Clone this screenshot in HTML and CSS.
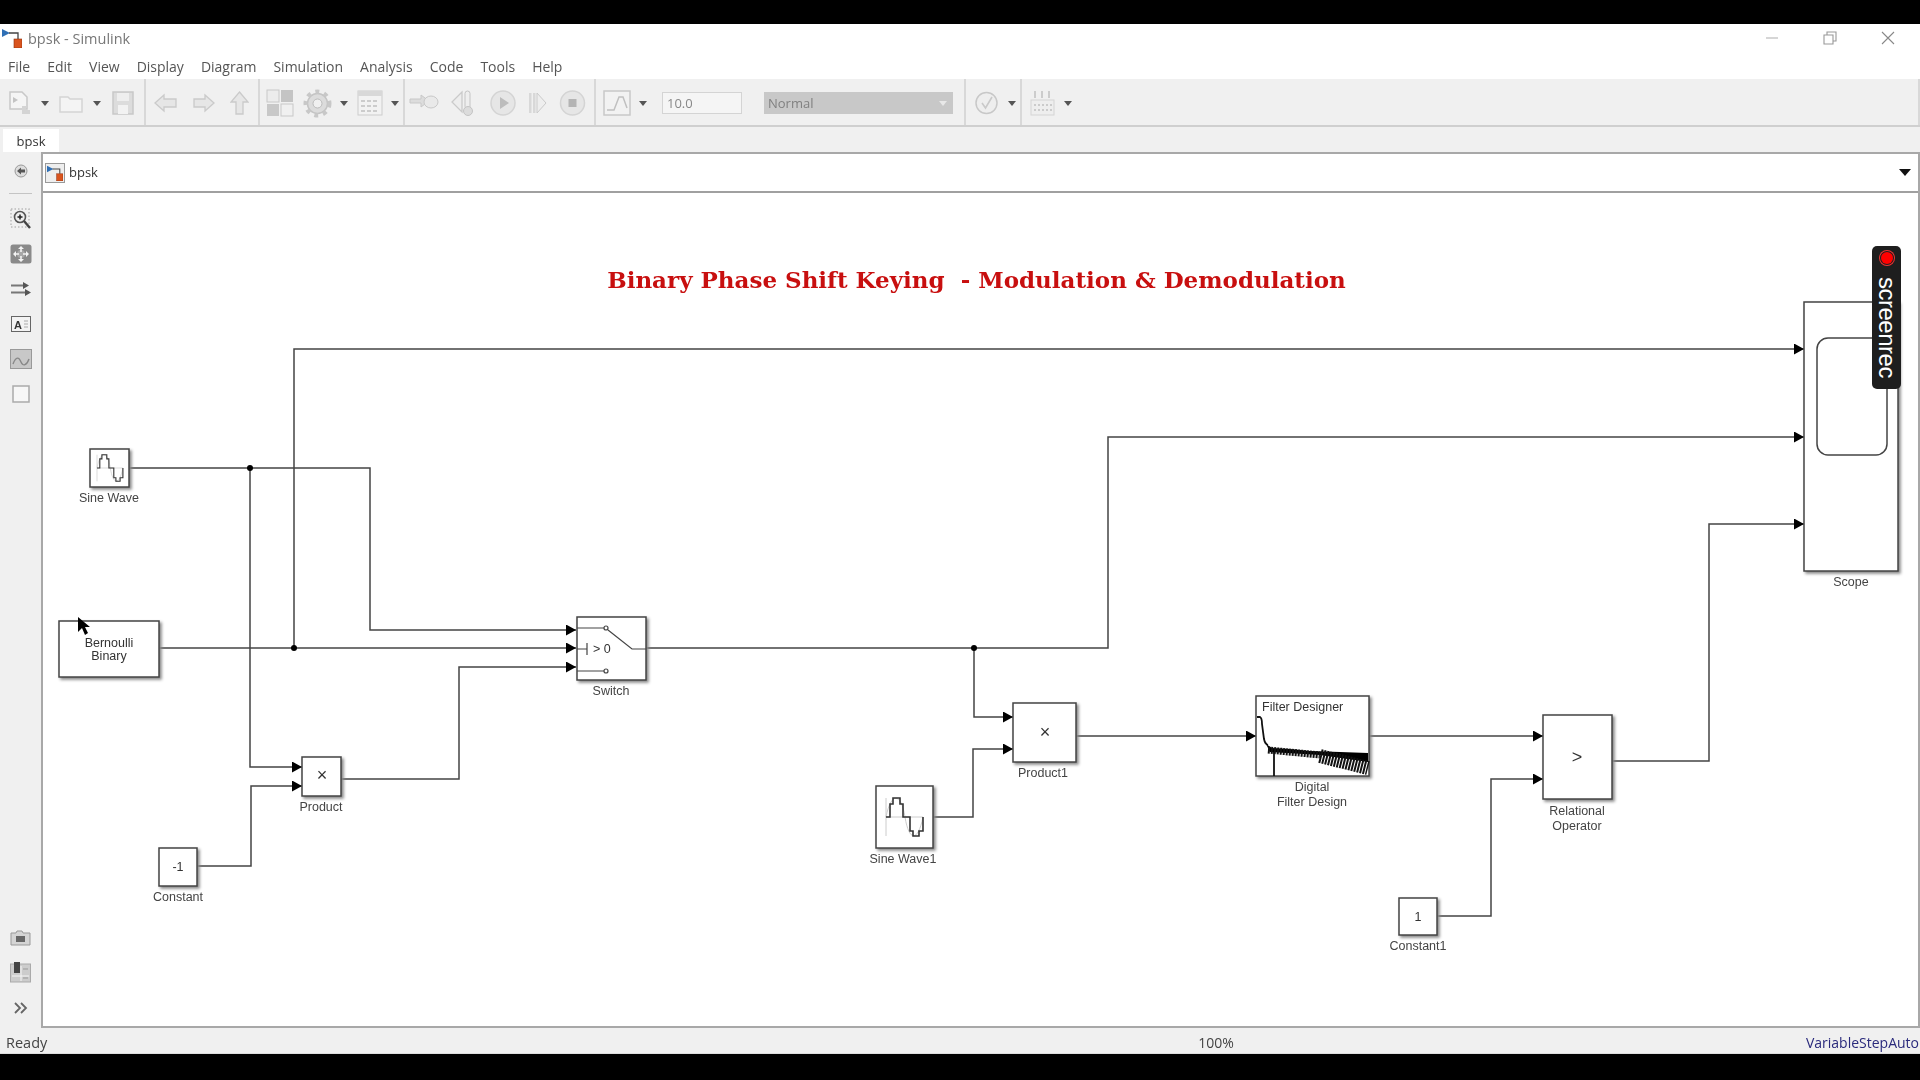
FILE: index.html
```html
<!DOCTYPE html>
<html lang="en">

<head>
    <meta charset="UTF-8">
    <title>bpsk - Simulink</title>
    <link rel="stylesheet" href="styles.css">
</head>

<body>
    <svg class="defs" width="0" height="0">
        <defs>
            <!-- Simulink logo, used in title bar and breadcrumb -->
            <symbol id="logo" viewBox="0 0 20 20">
                <path d="M0 1 L8 5 L0 9 Z" fill="#2f6fb5" />
                <path d="M7 5 H16 V11" fill="none" stroke="#444" stroke-width="1.3" />
                <rect x="12" y="11" width="8" height="9" fill="#d9541e" stroke="#8c3010" stroke-width=".6" />
            </symbol>
            <symbol id="caret" viewBox="0 0 8 5">
                <path d="M0 0 H8 L4 5 Z" fill="#555" />
            </symbol>
            <marker id="arrow" markerUnits="userSpaceOnUse" markerWidth="10" markerHeight="11" refX="10" refY="5.5"
                orient="auto">
                <path d="M0 0 L10 5.5 L0 11 Z" fill="#000" />
            </marker>
        </defs>
    </svg>

    <div class="app">
        <div class="titlebar">
            <svg class="title-logo"><use href="#logo" /></svg>
            <span class="title-text">bpsk - Simulink</span>
            <div class="win-controls">
                <svg width="14" height="14" viewBox="0 0 14 14"><path d="M1 7 H13" stroke="#bbb" stroke-width="1.2" /></svg>
                <svg width="14" height="14" viewBox="0 0 14 14"><path d="M1 4 H10 V13 H1 Z M4 4 V1 H13 V10 H10" fill="none" stroke="#999" stroke-width="1.1" /></svg>
                <svg width="14" height="14" viewBox="0 0 14 14"><path d="M1 1 L13 13 M13 1 L1 13" stroke="#888" stroke-width="1.1" /></svg>
            </div>
        </div>

        <div class="menubar">
            <span>File</span><span>Edit</span><span>View</span><span>Display</span><span>Diagram</span>
            <span>Simulation</span><span>Analysis</span><span>Code</span><span>Tools</span><span>Help</span>
        </div>

        <div class="toolbar">
            <div class="tb-group g1">
                <svg width="23" height="26" viewBox="0 0 23 26"><path d="M2 2 H14 L19 7 V19 H2 Z" fill="#f5f5f5" stroke="#c8c8c8" stroke-width="1.5" /><path d="M5 7 L10 10 L5 13 Z" fill="#c4c4c4" /><path d="M14 16 L18 16 L18 20 L22 20 L22 24 L14 24 Z" fill="#d4d4d4" /></svg>
                <svg class="caret"><use href="#caret" /></svg>
                <svg width="24" height="22" viewBox="0 0 24 22"><path d="M1 5 H9 L11 7 H23 V20 H1 Z" fill="#f4f4f4" stroke="#d4d4d4" stroke-width="1.5" /></svg>
                <svg class="caret"><use href="#caret" /></svg>
                <svg width="24" height="26" viewBox="0 0 24 26"><rect x="2" y="2" width="20" height="22" fill="#dcdcdc" stroke="#c8c8c8" stroke-width="1.5" /><rect x="6" y="3" width="12" height="8" fill="#eee" /><rect x="7" y="15" width="10" height="9" fill="#f2f2f2" /></svg>
            </div>
            <div class="tb-group g2">
                <svg width="23" height="20" viewBox="0 0 23 20"><path d="M1 10 L10 2 V6 H22 V14 H10 V18 Z" fill="#e6e6e6" stroke="#cacaca" stroke-width="1.3" /></svg>
                <svg width="22" height="20" viewBox="0 0 22 20"><path d="M21 10 L12 2 V6 H1 V14 H12 V18 Z" fill="#e6e6e6" stroke="#cacaca" stroke-width="1.3" /></svg>
                <svg width="19" height="24" viewBox="0 0 19 24"><path d="M9.5 1 L18 11 H13 V23 H6 V11 H1 Z" fill="#e6e6e6" stroke="#cacaca" stroke-width="1.3" /></svg>
            </div>
            <div class="tb-group g3">
                <svg width="28" height="28" viewBox="0 0 28 28"><rect x="1" y="1" width="12" height="12" fill="#ececec" stroke="#c8c8c8" /><rect x="15" y="1" width="12" height="12" fill="#c4c4c4" /><rect x="1" y="15" width="12" height="12" fill="#c8c8c8" /><rect x="15" y="15" width="12" height="12" fill="#f0f0f0" stroke="#c8c8c8" /></svg>
                <svg width="29" height="29" viewBox="0 0 29 29"><circle cx="14.5" cy="14.5" r="10" fill="#dcdcdc" stroke="#c4c4c4" stroke-width="1.5" /><circle cx="14.5" cy="14.5" r="12" fill="none" stroke="#c8c8c8" stroke-width="4" stroke-dasharray="4 5" /><circle cx="14.5" cy="14.5" r="4.5" fill="#f0f0f0" stroke="#bbb" /></svg>
                <svg class="caret"><use href="#caret" /></svg>
                <svg width="26" height="26" viewBox="0 0 26 26"><rect x="1" y="1" width="24" height="24" fill="#f2f2f2" stroke="#ccc" /><rect x="1" y="1" width="24" height="5" fill="#d8d8d8" /><path d="M4 11 H22 M4 16 H22 M4 21 H22" stroke="#c0c0c0" stroke-width="1.5" stroke-dasharray="4 2" /></svg>
                <svg class="caret"><use href="#caret" /></svg>
            </div>
            <div class="tb-group g4">
                <svg width="30" height="22" viewBox="0 0 30 22"><path d="M1 7 H12 V3 L20 9 L12 15 V11 H1 Z" fill="#dcdcdc" stroke="#c8c8c8" /><ellipse cx="22" cy="10" rx="7" ry="6" fill="#e9e9e9" stroke="#c8c8c8" /></svg>
                <svg width="26" height="28" viewBox="0 0 26 28"><path d="M11 3 L1 13 L11 23 Z" fill="#ededed" stroke="#cacaca" stroke-width="1.3" /><rect x="14" y="2" width="5" height="18" rx="2.5" fill="#eee" stroke="#c4c4c4" /><circle cx="17" cy="22" r="4.5" fill="#dcdcdc" stroke="#c4c4c4" /></svg>
                <svg width="26" height="26" viewBox="0 0 26 26"><circle cx="13" cy="13" r="12" fill="#e6e6e6" stroke="#d4d4d4" stroke-width="1.5" /><path d="M10 7 L19 13 L10 19 Z" fill="#bcbcbc" /></svg>
                <svg width="19" height="24" viewBox="0 0 19 24"><rect x="1" y="2" width="2.5" height="20" fill="#d8d8d8" /><rect x="5" y="2" width="2.5" height="20" fill="#d8d8d8" /><path d="M9 2 L18 12 L9 22 Z" fill="#eee" stroke="#cacaca" /></svg>
                <svg width="27" height="26" viewBox="0 0 27 26"><circle cx="13.5" cy="13" r="12" fill="#e6e6e6" stroke="#d4d4d4" stroke-width="1.5" /><rect x="9.5" y="9" width="8" height="8" fill="#b4b4b4" /></svg>
            </div>
            <div class="tb-group g5">
                <svg width="28" height="26" viewBox="0 0 28 26"><rect x="1" y="1" width="26" height="24" fill="#f2f2f2" stroke="#c8c8c8" stroke-width="1.5" /><path d="M4 20 L11 20 L16 7 L20 7 L24 18" fill="none" stroke="#c0c0c0" stroke-width="1.5" /></svg>
                <svg class="caret"><use href="#caret" /></svg>
                <span class="stop-time">10.0</span>
                <span class="sim-mode">Normal<svg width="8" height="5" viewBox="0 0 8 5"><path d="M0 0 H8 L4 5 Z" fill="#e8e8e8" /></svg></span>
            </div>
            <div class="tb-group g6">
                <svg width="23" height="24" viewBox="0 0 23 24"><circle cx="11.5" cy="12" r="10.5" fill="#eee" stroke="#c8c8c8" stroke-width="1.5" /><path d="M7 12 L10.5 17 L17 6" fill="none" stroke="#c9c9c9" stroke-width="1.6" /></svg>
                <svg class="caret"><use href="#caret" /></svg>
            </div>
            <div class="tb-group g7">
                <svg width="25" height="26" viewBox="0 0 25 26"><rect x="1" y="10" width="23" height="15" fill="#eee" stroke="#d4d4d4" /><path d="M4 15 H22 M4 20 H22" stroke="#c0c0c0" stroke-width="1.5" stroke-dasharray="2 2" /><path d="M5 1 V8 M12 1 V8 M19 1 V8" stroke="#c0c0c0" stroke-width="1.5" /></svg>
                <svg class="caret"><use href="#caret" /></svg>
            </div>
        </div>

        <div class="tabstrip">
            <span class="tab">bpsk</span>
        </div>

        <div class="workspace">
            <div class="sidebar">
                <div class="side-back">
                    <svg width="14" height="14" viewBox="0 0 14 14"><circle cx="7" cy="7" r="6" fill="#ddd" stroke="#999" /><path d="M3 7 L7 3.5 V5.5 H11 V8.5 H7 V10.5 Z" fill="#555" /></svg>
                </div>
                <div class="side-sep"></div>
                <div class="side-item">
                    <svg width="22" height="22" viewBox="0 0 22 22"><rect x="1" y="1" width="18" height="18" fill="none" stroke="#bbb" stroke-width="1.5" stroke-dasharray="1.5 2" /><circle cx="10" cy="9" r="5.5" fill="#eee" stroke="#555" stroke-width="1.6" /><path d="M7.5 9 H12.5 M10 6.5 V11.5" stroke="#222" stroke-width="1.5" /><path d="M14 13 L20 20" stroke="#444" stroke-width="2.4" /></svg>
                </div>
                <div class="side-item">
                    <svg width="22" height="20" viewBox="0 0 22 20"><rect x="0.5" y="0.5" width="21" height="19" rx="2.5" fill="#8a8a8a" /><circle cx="11" cy="10" r="4" fill="#a8a8a8" /><path d="M11 2 L14 5 H8 Z M11 18 L14 15 H8 Z M3 10 L6 7 V13 Z M19 10 L16 7 V13 Z" fill="#f4f4f4" /><path d="M11 5 V8 M11 12 V15 M6 10 H9 M13 10 H16" stroke="#f4f4f4" stroke-width="1.6" /></svg>
                </div>
                <div class="side-item">
                    <svg width="20" height="14" viewBox="0 0 20 14"><path d="M0 3.5 H15 M0 10.5 H18" stroke="#777" stroke-width="2" /><path d="M12 0 L18 3.5 L12 7 Z M14 7 L20 10.5 L14 14 Z" fill="#555" /></svg>
                </div>
                <div class="side-item">
                    <svg width="20" height="16" viewBox="0 0 20 16"><rect x="0.5" y="0.5" width="19" height="15" fill="#f3f3f3" stroke="#666" /><text x="3" y="12.5" class="side-a">A</text><path d="M13 5 H17 M13 8 H17 M13 11 H17" stroke="#aaa" /></svg>
                </div>
                <div class="side-item">
                    <svg width="22" height="20" viewBox="0 0 22 20"><rect x="0.5" y="0.5" width="21" height="19" fill="#c8c8c8" stroke="#999" /><path d="M3 15 C6 7 9 8 11 13 S17 16 19 10" fill="none" stroke="#888" stroke-width="1.4" /></svg>
                </div>
                <div class="side-item">
                    <svg width="18" height="18" viewBox="0 0 18 18"><rect x="1" y="1" width="16" height="16" fill="#f7f7f7" stroke="#aaa" stroke-width="1.5" /></svg>
                </div>
                <div class="side-item side-bottom">
                    <svg width="21" height="16" viewBox="0 0 21 16"><path d="M1 3 H6 L7 1 H12 L13 3 H20 V15 H1 Z" fill="#d4d4d4" stroke="#999" /><rect x="6" y="6" width="9" height="6" fill="#666" /></svg>
                </div>
                <div class="side-item">
                    <svg width="21" height="21" viewBox="0 0 21 21"><rect x="0.5" y="2" width="20" height="18" fill="#ccc" stroke="#aaa" /><rect x="4" y="0" width="6" height="11" fill="#444" /><path d="M2 14 H19 M11 4 V19" stroke="#f5f5f5" /><path d="M13 7 H18 M13 16 H18" stroke="#999" /></svg>
                </div>
                <div class="side-item">
                    <svg width="14" height="12" viewBox="0 0 14 12"><path d="M1 1 L6 6 L1 11 M7 1 L12 6 L7 11" fill="none" stroke="#666" stroke-width="1.8" /></svg>
                </div>
            </div>

            <div class="editor">
                <div class="breadcrumb">
                    <span class="crumb-icon"><svg width="16" height="16"><use href="#logo" /></svg></span>
                    <span class="crumb-text">bpsk</span>
                    <svg class="crumb-arrow" width="12" height="7" viewBox="0 0 12 7"><path d="M0 0 H12 L6 7 Z" fill="#111" /></svg>
                </div>

                <!-- viewBox keeps the diagram in screen coordinates -->
                <svg class="canvas" width="1875" height="833" viewBox="43 193 1875 833">
                    <text x="976.5" y="288" class="heading">Binary Phase Shift Keying  - Modulation &amp; Demodulation</text>

                    <!-- signal lines -->
                    <g class="wire">
                        <path d="M129 468 H370 V630 H576" marker-end="url(#arrow)" />
                        <path d="M250 468 V767 H302" marker-end="url(#arrow)" />
                        <path d="M159 648 H576" marker-end="url(#arrow)" />
                        <path d="M294 648 V349 H1804" marker-end="url(#arrow)" />
                        <path d="M197 866 H251 V786 H302" marker-end="url(#arrow)" />
                        <path d="M341 779 H459 V667 H576" marker-end="url(#arrow)" />
                        <path d="M646 648 H1108 V437 H1804" marker-end="url(#arrow)" />
                        <path d="M974 648 V717 H1013" marker-end="url(#arrow)" />
                        <path d="M933 817 H973 V749 H1013" marker-end="url(#arrow)" />
                        <path d="M1076 736 H1256" marker-end="url(#arrow)" />
                        <path d="M1369 736 H1543" marker-end="url(#arrow)" />
                        <path d="M1437 916 H1491 V779 H1543" marker-end="url(#arrow)" />
                        <path d="M1612 761 H1709 V524 H1804" marker-end="url(#arrow)" />
                    </g>
                    <circle cx="250" cy="468" r="3" />
                    <circle cx="294" cy="648" r="3" />
                    <circle cx="974" cy="648" r="3" />

                    <!-- blocks -->
                    <g class="block">
                        <rect x="90" y="449" width="39" height="38" />
                        <rect x="59" y="621" width="100" height="56" />
                        <rect x="159" y="848" width="38" height="38" />
                        <rect x="302" y="757" width="39" height="39" />
                        <rect x="577" y="617" width="69" height="63" />
                        <rect x="876" y="786" width="57" height="62" />
                        <rect x="1013" y="703" width="63" height="59" />
                        <rect x="1256" y="696" width="113" height="80" />
                        <rect x="1543" y="715" width="69" height="84" />
                        <rect x="1399" y="898" width="38" height="37" />
                        <rect x="1804" y="302" width="94" height="269" />
                    </g>

                    <!-- sine wave icons -->
                    <g transform="translate(97 468) scale(.7)" class="sine">
                        <path class="axis" d="M0 -19 V19 M0 0 H37 M0 0 C5 -25 15 -25 19 0 S32 25 37 0" />
                        <path d="M0 0 H4 V-13 H7 V-19 H14 V-13 H17 V0 H24 V14 H27 V19 H33 V14 H37 V0" />
                    </g>
                    <g transform="translate(886 817)" class="sine">
                        <path class="axis" d="M0 -19 V19 M0 0 H37 M0 0 C5 -25 15 -25 19 0 S32 25 37 0" />
                        <path d="M0 0 H4 V-13 H7 V-19 H14 V-13 H17 V0 H24 V14 H27 V19 H33 V14 H37 V0" />
                    </g>

                    <!-- switch internals -->
                    <g class="wire-thin">
                        <path d="M577 628 H604 M608 630 L632 649 H646 M577 671 H604 M577 649 H587 M587 643 V655" />
                        <circle cx="606" cy="628" r="2" />
                        <circle cx="606" cy="671" r="2" />
                    </g>
                    <text x="593" y="653" class="blk-text start">&gt; 0</text>

                    <!-- filter response -->
                    <text x="1262" y="711" class="blk-text start">Filter Designer</text>
                    <path class="filter-line" d="M1257 717 H1260 Q1262 718 1262 724 L1264 739 Q1265 744 1268 745 M1274 750 V776" />
                    <polygon points="1266,744 1272,748 1290,749 1310,751 1340,752 1368,753 1368,762 1320,755 1270,752" />
                    <path class="filter-comb" d="M1268 750 L1320 755" stroke-width="7" />
                    <path class="filter-comb" d="M1320 756 L1368 768" stroke-width="14" />

                    <!-- scope display -->
                    <rect class="scope-screen" x="1817" y="338" width="70" height="117" rx="11" />

                    <!-- block text -->
                    <g class="blk-text">
                        <text x="109" y="647">Bernoulli</text>
                        <text x="109" y="660">Binary</text>
                        <text x="178" y="871">-1</text>
                        <text x="322" y="781" class="big">×</text>
                        <text x="1045" y="738" class="big">×</text>
                        <text x="1577" y="763" class="big">&gt;</text>
                        <text x="1418" y="921">1</text>
                    </g>

                    <!-- block labels -->
                    <g class="blk-label">
                        <text x="109" y="502">Sine Wave</text>
                        <text x="178" y="901">Constant</text>
                        <text x="321" y="811">Product</text>
                        <text x="611" y="695">Switch</text>
                        <text x="903" y="863">Sine Wave1</text>
                        <text x="1043" y="777">Product1</text>
                        <text x="1312" y="791">Digital</text>
                        <text x="1312" y="806">Filter Design</text>
                        <text x="1577" y="815">Relational</text>
                        <text x="1577" y="830">Operator</text>
                        <text x="1418" y="950">Constant1</text>
                        <text x="1851" y="586">Scope</text>
                    </g>

                    <!-- mouse pointer -->
                    <polygon points="78,617 78,632 82,628 85,635 88,633 85,627 90,627" />
                </svg>
            </div>
        </div>

        <div class="statusbar">
            <span>Ready</span>
            <span class="zoom-level">100%</span>
            <span class="solver">VariableStepAuto</span>
        </div>
    </div>

    <!-- recorder badge sits over the diagram -->
    <div class="rec-badge">
        <span class="rec-dot"></span>
        <span class="rec-text">screenrec</span>
    </div>
</body>

</html>
```

FILE: styles.css
```css
/* Page frame: black bars above and below the window */
body {
    margin: 0;
    height: 1080px;
    overflow: hidden;
    background: #000;
    font-family: "Open Sans", "Noto Sans", sans-serif;
    position: relative;
}

.defs {
    position: absolute;
}

.app {
    margin-top: 24px;
    height: 1030px;
    display: flex;
    flex-direction: column;
    background: #fff;
    filter: blur(.4px);
}

/* Title bar */
.titlebar {
    height: 28px;
    display: flex;
    align-items: center;
    flex: none;
}

.title-logo {
    width: 20px;
    height: 20px;
    margin-left: 2px;
}

.title-text {
    margin-left: 6px;
    font-size: 14.5px;
    color: #777;
}

.win-controls {
    margin-left: auto;
    display: flex;
    gap: 44px;
    padding-right: 25px;
}

/* Menu */
.menubar {
    height: 27px;
    flex: none;
    box-sizing: border-box;
    padding: 2px 0 0 8px;
    display: flex;
    align-items: center;
    gap: 17px;
    font-size: 14px;
    color: #555;
}

/* Toolbar */
.toolbar {
    height: 46px;
    flex: none;
    box-sizing: content-box;
    display: flex;
    background: #f0f0f0;
    border-bottom: 2px solid #cfcfcf;
}

.tb-group {
    display: flex;
    align-items: center;
    justify-content: space-between;
    box-sizing: border-box;
    padding-top: 2px;
    border-right: 2px solid #d8d8d8;
}

.g1 { width: 146px; padding-left: 8px; padding-right: 9px; }
.g2 { width: 114px; padding-left: 8px; padding-right: 9px; }
.g3 { width: 145px; padding-left: 6px; padding-right: 4px; }
.g4 { width: 191px; padding-left: 4px; padding-right: 8px; }
.g5 { width: 370px; padding-left: 7px; padding-right: 10px; justify-content: flex-start; }
.g6 { width: 56px; padding-left: 9px; padding-right: 4px; justify-content: flex-start; gap: 10px; }
.g7 { flex: 1; padding-left: 8px; justify-content: flex-start; gap: 9px; }

.caret {
    width: 8px;
    height: 5px;
    flex: none;
}

.g5 .caret {
    margin-left: 8px;
}

.stop-time {
    width: 80px;
    height: 22px;
    margin-left: 15px;
    box-sizing: border-box;
    border: 1px solid #d4d4d4;
    background: #f5f5f5;
    font-size: 13px;
    line-height: 20px;
    padding-left: 4px;
    color: #888;
}

.sim-mode {
    width: 189px;
    height: 22px;
    margin-left: 22px;
    box-sizing: border-box;
    background: #c8c8c8;
    font-size: 13px;
    line-height: 22px;
    padding: 0 6px 0 4px;
    color: #808080;
    display: flex;
    align-items: center;
    justify-content: space-between;
}

/* Tabs */
.tabstrip {
    height: 25px;
    flex: none;
    background: #f0f0f0;
    display: flex;
    align-items: flex-end;
    padding-left: 3px;
}

.tab {
    width: 56px;
    height: 23px;
    background: #fff;
    text-align: center;
    font-size: 13px;
    line-height: 24px;
    color: #333;
}

/* Workspace */
.workspace {
    flex: 1;
    display: flex;
    min-height: 0;
}

.sidebar {
    width: 41px;
    flex: none;
    box-sizing: border-box;
    background: #f0f0f0;
    display: flex;
    flex-direction: column;
    align-items: center;
    padding: 12px 0 3px;
}

.side-back {
    height: 14px;
    display: flex;
}

.side-sep {
    width: 23px;
    height: 1px;
    margin: 15px 0 7px;
    background: #c4c4c4;
    flex: none;
}

.side-item {
    height: 35px;
    flex: none;
    display: flex;
    align-items: center;
    justify-content: center;
}

.side-bottom {
    margin-top: auto;
}

.side-a {
    font-family: "Liberation Sans", sans-serif;
    font-size: 11px;
    font-weight: bold;
    fill: #333;
}

.editor {
    flex: 1;
    min-width: 0;
    display: flex;
    flex-direction: column;
    border: 2px solid #a8a8a8;
    background: #fff;
}

.breadcrumb {
    height: 37px;
    flex: none;
    box-sizing: content-box;
    display: flex;
    align-items: center;
    border-bottom: 2px solid #a0a0a0;
    padding-left: 2px;
}

.crumb-icon {
    width: 20px;
    height: 20px;
    box-sizing: border-box;
    border: 1px solid #999;
    background: #eee;
    display: flex;
    align-items: center;
    justify-content: center;
}

.crumb-text {
    margin: 0 0 2px 4px;
    font-size: 13px;
    color: #333;
}

.crumb-arrow {
    margin-left: auto;
    margin-right: 7px;
}

/* Diagram */
.canvas {
    display: block;
    flex: none;
    font-family: "Liberation Sans", Arial, sans-serif;
}

.heading {
    font-family: "DejaVu Serif", serif;
    font-size: 23px;
    font-weight: bold;
    fill: #c80f0f;
    text-anchor: middle;
    white-space: pre;
}

.wire path {
    fill: none;
    stroke: #444;
    stroke-width: 1.5;
}

.wire-thin,
.wire-thin path {
    fill: none;
    stroke: #444;
    stroke-width: 1.2;
}

.block rect {
    fill: #fff;
    stroke: #444;
    stroke-width: 1.5;
    filter: drop-shadow(2px 2px 1.5px #888);
}

.sine path {
    fill: none;
    stroke: #333;
    stroke-width: 1.6;
}

.sine .axis {
    stroke: #ccc;
    stroke-width: 1;
}

.filter-line {
    fill: none;
    stroke: #111;
    stroke-width: 1.8;
}

.filter-comb {
    fill: none;
    stroke: #111;
    stroke-dasharray: 2 1;
}

.blk-text {
    font-size: 12.5px;
    fill: #333;
    text-anchor: middle;
}

.blk-text.start {
    text-anchor: start;
}

.blk-text .big {
    font-size: 18px;
}

.blk-label {
    font-size: 12.5px;
    fill: #444;
    text-anchor: middle;
}

.scope-screen {
    fill: #fff;
    stroke: #444;
    stroke-width: 1.5;
}

/* Status bar */
.statusbar {
    height: 26px;
    flex: none;
    box-sizing: border-box;
    display: flex;
    align-items: center;
    padding: 3px 0 0 6px;
    background: #f0f0f0;
    border-bottom: 1px solid #ddd;
    font-size: 14.5px;
    color: #444;
}

.zoom-level {
    margin-left: 1151px;
    font-size: 14px;
}

.solver {
    margin-left: auto;
    padding-right: 1px;
    font-size: 14px;
    color: #2a2a7c;
}

/* Recorder badge */
.rec-badge {
    position: absolute;
    left: 1872px;
    top: 246px;
    width: 29px;
    height: 143px;
    border-radius: 5px;
    background: #1e1e1e;
    display: flex;
    flex-direction: column;
    align-items: center;
}

.rec-dot {
    width: 12px;
    height: 12px;
    margin-top: 6px;
    flex: none;
    border-radius: 50%;
    background: #f00;
    box-shadow: 0 0 0 1px #1e1e1e, 0 0 0 2px #e33;
}

.rec-text {
    margin: 13px 0 0 2px;
    writing-mode: vertical-rl;
    font-family: "Liberation Sans", Arial, sans-serif;
    font-size: 24px;
    line-height: 29px;
    letter-spacing: -.5px;
    color: #fff;
}
```
